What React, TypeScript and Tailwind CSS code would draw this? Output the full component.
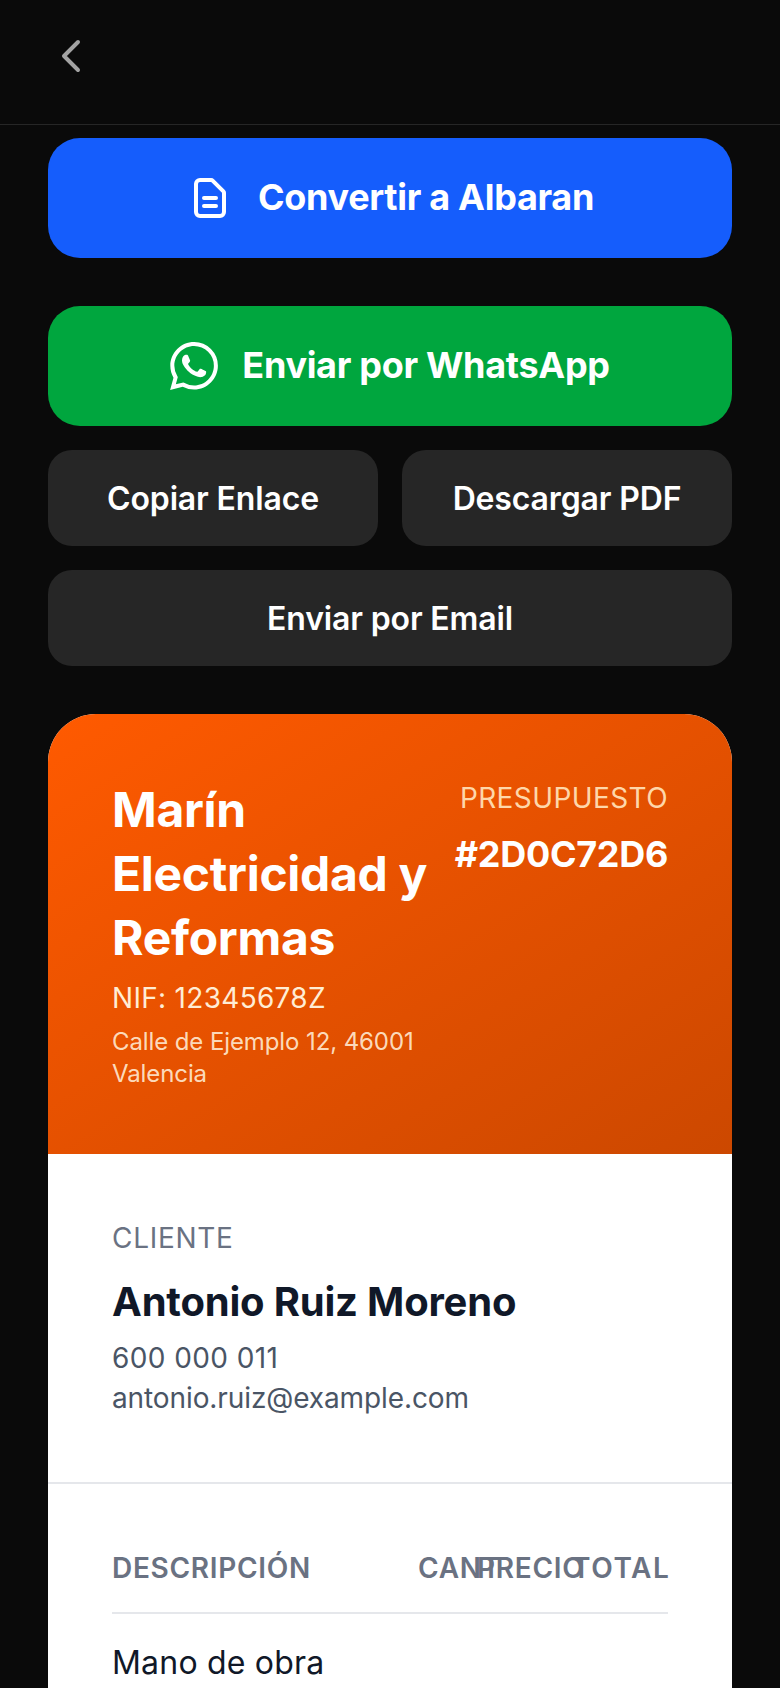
import { SiWhatsapp } from 'react-icons/si';

const SANS = "font-['Inter','Liberation_Sans',sans-serif]";

export default function App() {
  return (
    <div className={`h-[1688px] w-[780px] overflow-hidden bg-[#0a0a0a] ${SANS}`}>
      {/* Barra superior */}
      <header className="h-[125px] border-b border-[#262626] px-12 pt-8">
        <svg width="48" height="48" viewBox="0 0 24 24" fill="none" stroke="#a3a3a3" strokeWidth="2" strokeLinecap="round" strokeLinejoin="round">
          <path d="M15 19l-7-7 7-7" />
        </svg>
      </header>

      <main className="px-12 pt-[13px]">
        {/* Acciones */}
        <button className="flex h-[120px] w-full items-center justify-center gap-6 rounded-[32px] bg-[#155dfc] text-[36px] font-bold tracking-[-0.3px] text-white">
          <svg width="48" height="48" viewBox="0 0 24 24" fill="none" stroke="currentColor" strokeWidth="2" strokeLinecap="round" strokeLinejoin="round">
            <path d="M9 12h6m-6 4h6m2 5H7a2 2 0 01-2-2V5a2 2 0 012-2h5.586a1 1 0 01.707.293l5.414 5.414a1 1 0 01.293.707V19a2 2 0 01-2 2z" />
          </svg>
          <span className="-mt-[2px]">Convertir a Albaran</span>
        </button>

        <button className="mt-12 flex h-[120px] w-full items-center justify-center gap-6 rounded-[32px] bg-[#00a63e] text-[36px] font-bold tracking-[-0.3px] text-white">
          <SiWhatsapp size={48} />
          <span className="-mt-[2px]">Enviar por WhatsApp</span>
        </button>

        <div className="mt-6 grid grid-cols-2 gap-6">
          <button className="h-[96px] rounded-3xl bg-[#262626] pt-[2px] text-[32px] font-semibold tracking-[-0.15px] text-white">Copiar Enlace</button>
          <button className="h-[96px] rounded-3xl bg-[#262626] pt-[2px] text-[32px] font-semibold tracking-[-0.15px] text-white">Descargar PDF</button>
          <button className="col-span-2 h-[96px] rounded-3xl bg-[#262626] pt-[2px] text-[32px] font-semibold tracking-[-0.15px] text-white">Enviar por Email</button>
        </div>

        {/* Documento */}
        <section className="mt-12 overflow-hidden rounded-[48px] bg-white pb-24">
          <div className="flex h-[440px] items-start justify-between bg-gradient-to-br from-[#ff5a00] to-[#cc4800] p-16 text-white">
            <div>
              <h1 className="whitespace-nowrap text-[48px] font-bold leading-[64px] tracking-[-0.3px]">
                Marín<br />Electricidad y<br />Reformas
              </h1>
              <p className="mt-2 text-[28px] leading-10 tracking-[0.3px] text-[#ffedd5]">NIF: 12345678Z</p>
              <p className="mt-2 w-[320px] text-[24px] leading-8 tracking-[-0.1px] text-[#ffedd5]/90">Calle de Ejemplo 12, 46001 Valencia</p>
            </div>
            <div className="shrink-0 text-right">
              <p className="text-[28px] leading-10 tracking-[0.4px] text-[#fed7aa]">PRESUPUESTO</p>
              <p className="mt-4 text-[36px] font-bold leading-10 tracking-[-0.3px]">#2D0C72D6</p>
            </div>
          </div>

          <div className="border-b-2 border-[#e5e7eb] p-16">
            <p className="text-[28px] leading-10 tracking-wide text-[#6a7282]">CLIENTE</p>
            <p className="mt-4 text-[40px] font-bold leading-[56px] tracking-[-0.2px] text-[#101828]">Antonio Ruiz Moreno</p>
            <p className="mt-2 text-[28px] leading-10 tracking-[0.4px] text-[#4a5565]">600 000 011</p>
            <p className="text-[28px] leading-10 tracking-[-0.1px] text-[#4a5565]">antonio.ruiz@example.com</p>
          </div>

          <div className="px-16 pt-16">
            {/* Las columnas se pisan igual que en la captura */}
            <div className="grid grid-cols-[306px_59px_95px_1fr] whitespace-nowrap border-b-2 border-[#e5e7eb] pb-6 text-[28px] font-semibold leading-10 tracking-wide text-[#6a7282]">
              <span>DESCRIPCIÓN</span>
              <span>CANT</span>
              <span>PRECIO</span>
              <span className="tracking-[1.6px]">TOTAL</span>
            </div>
            <p className="mt-[29px] text-[32px] leading-10 tracking-[0.2px] text-[#101828]">Mano de obra</p>
          </div>
        </section>
      </main>
    </div>
  );
}
